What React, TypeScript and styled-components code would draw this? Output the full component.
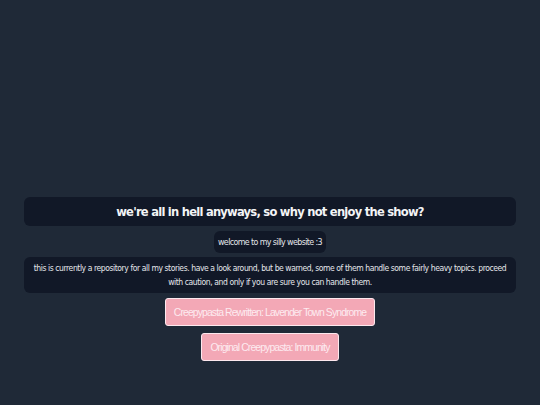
import styled, { createGlobalStyle } from "styled-components";

const GlobalStyle = createGlobalStyle`
  html, body {
    margin: 0;
    padding: 0;
    background-color: #1f2937;
  }
  body {
    font-family: "DejaVu Sans Condensed", "DejaVu Sans", sans-serif;
    font-stretch: condensed;
    color: #e5e7eb;
  }
`

const Page = styled.main`
  min-height: 100vh;
  box-sizing: border-box;
  padding: 197px 24px 0;
  display: flex;
  flex-direction: column;
  align-items: center;
`

const Panel = styled.div<{ $wide?: boolean }>`
  background-color: #111827;
  border-radius: 6px;
  text-align: center;
  box-sizing: border-box;
  width: ${(p) => (p.$wide ? "100%" : "fit-content")};
`

const Title = styled(Panel)`
  height: 29px;
  display: flex;
  align-items: center;
  justify-content: center;
  font-size: 12.8px;
  letter-spacing: -0.75px;
  font-weight: 700;
  color: #f3f4f6;
`

const Welcome = styled(Panel)`
  margin-top: 5px;
  height: 22px;
  padding: 0 4px;
  display: flex;
  align-items: center;
  font-size: 8.8px;
  letter-spacing: -0.6px;
`

const Intro = styled(Panel)`
  margin-top: 4px;
  padding: 4px 6px;
  font-size: 8.5px;
  letter-spacing: -0.42px;
  line-height: 14px;
`

const StoryList = styled.nav`
  margin-top: 5px;
  display: flex;
  flex-direction: column;
  align-items: center;
  gap: 7px;
`

const StoryButton = styled.a`
  display: flex;
  align-items: center;
  height: 28px;
  padding: 0 8px;
  box-sizing: border-box;
  background-color: #f3a8b6;
  border: 1.5px solid #fde8ee;
  border-radius: 3px;
  color: #fdebf0;
  font-family: "Liberation Sans", Arial, sans-serif;
  font-stretch: normal;
  font-size: 10.4px;
  letter-spacing: -0.88px;
  text-decoration: none;
  cursor: pointer;
`

const stories = [
  "Creepypasta Rewritten: Lavender Town Syndrome",
  "Original Creepypasta: Immunity",
]

export default function App() {
  return (
    <>
      <GlobalStyle />
      <Page>
        <Title $wide>we're all in hell anyways, so why not enjoy the show?</Title>
        <Welcome>welcome to my silly website :3</Welcome>
        <Intro $wide>
          this is currently a repository for all my stories. have a look around, but be warned, some of them
          handle some fairly heavy topics. proceed with caution, and only if you are sure you can handle them.
        </Intro>
        <StoryList>
          {stories.map((s) => (
            <StoryButton key={s}>{s}</StoryButton>
          ))}
        </StoryList>
      </Page>
    </>
  )
}
